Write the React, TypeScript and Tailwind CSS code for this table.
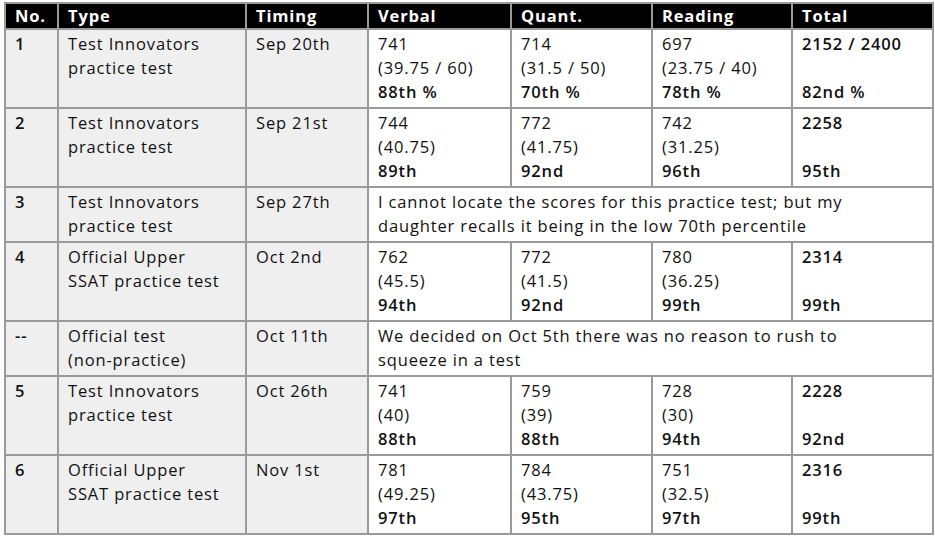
const rows: {
  no: string
  type: string[]
  timing: string
  note?: string[]
  verbal?: string[]
  quant?: string[]
  reading?: string[]
  total?: string[]
}[] = [
  {
    no: "1",
    type: ["Test Innovators", "practice test"],
    timing: "Sep 20th",
    verbal: ["741", "(39.75 / 60)", "88th %"],
    quant: ["714", "(31.5 / 50)", "70th %"],
    reading: ["697", "(23.75 / 40)", "78th %"],
    total: ["2152 / 2400", "82nd %"],
  },
  {
    no: "2",
    type: ["Test Innovators", "practice test"],
    timing: "Sep 21st",
    verbal: ["744", "(40.75)", "89th"],
    quant: ["772", "(41.75)", "92nd"],
    reading: ["742", "(31.25)", "96th"],
    total: ["2258", "95th"],
  },
  {
    no: "3",
    type: ["Test Innovators", "practice test"],
    timing: "Sep 27th",
    note: [
      "I cannot locate the scores for this practice test; but my",
      "daughter recalls it being in the low 70th percentile",
    ],
  },
  {
    no: "4",
    type: ["Official Upper", "SSAT practice test"],
    timing: "Oct 2nd",
    verbal: ["762", "(45.5)", "94th"],
    quant: ["772", "(41.5)", "92nd"],
    reading: ["780", "(36.25)", "99th"],
    total: ["2314", "99th"],
  },
  {
    no: "--",
    type: ["Official test", "(non-practice)"],
    timing: "Oct 11th",
    note: [
      "We decided on Oct 5th there was no reason to rush to",
      "squeeze in a test",
    ],
  },
  {
    no: "5",
    type: ["Test Innovators", "practice test"],
    timing: "Oct 26th",
    verbal: ["741", "(40)", "88th"],
    quant: ["759", "(39)", "88th"],
    reading: ["728", "(30)", "94th"],
    total: ["2228", "92nd"],
  },
  {
    no: "6",
    type: ["Official Upper", "SSAT practice test"],
    timing: "Nov 1st",
    verbal: ["781", "(49.25)", "97th"],
    quant: ["784", "(43.75)", "95th"],
    reading: ["751", "(32.5)", "97th"],
    total: ["2316", "99th"],
  },
]

const td = "border-2 border-[#9a9a9a] align-top px-[9px] pt-[2px] pb-[3px]"
const th = "border-2 border-[#9a9a9a] text-left font-bold px-[9px] py-[1px] leading-[22px]"

function Score({ v }: { v: string[] }) {
  return (
    <>
      <div>{v[0]}</div>
      <div>{v[1]}</div>
      <div className="font-semibold">{v[2]}</div>
    </>
  )
}

export default function App() {
  return (
    <div className="bg-white px-[4px] pt-[2px] font-['Open_Sans',sans-serif] text-[16.5px] leading-[24px] tracking-[0.85px] text-[#111]">
      <table className="w-[928px] table-fixed border-collapse">
        <colgroup>
          <col className="w-[53px]" />
          <col className="w-[188px]" />
          <col className="w-[122px]" />
          <col className="w-[143px]" />
          <col className="w-[141px]" />
          <col className="w-[140px]" />
          <col className="w-[141px]" />
        </colgroup>
        <thead>
          <tr className="bg-black text-white">
            <th className={th + " px-[4px]"}>No.</th>
            <th className={th}>Type</th>
            <th className={th}>Timing</th>
            <th className={th}>Verbal</th>
            <th className={th}>Quant.</th>
            <th className={th}>Reading</th>
            <th className={th + " px-[4px]"}>Total</th>
          </tr>
        </thead>
        <tbody>
          {rows.map((r, i) => (
            <tr key={i}>
              <td className={td + " bg-[#efefef] px-[5px] font-semibold"}>{r.no}</td>
              <td className={td + " bg-[#efefef]"}>
                {r.type.map((t) => (
                  <div key={t}>{t}</div>
                ))}
              </td>
              <td className={td + " bg-[#efefef]"}>{r.timing}</td>
              {r.note ? (
                <td colSpan={4} className={td}>
                  {r.note.map((t) => (
                    <div key={t}>{t}</div>
                  ))}
                </td>
              ) : (
                <>
                  <td className={td}>
                    <Score v={r.verbal!} />
                  </td>
                  <td className={td}>
                    <Score v={r.quant!} />
                  </td>
                  <td className={td}>
                    <Score v={r.reading!} />
                  </td>
                  <td className={td + " px-[4px] font-semibold"}>
                    <div>{r.total![0]}</div>
                    <div>&nbsp;</div>
                    <div>{r.total![1]}</div>
                  </td>
                </>
              )}
            </tr>
          ))}
        </tbody>
      </table>
    </div>
  )
}
